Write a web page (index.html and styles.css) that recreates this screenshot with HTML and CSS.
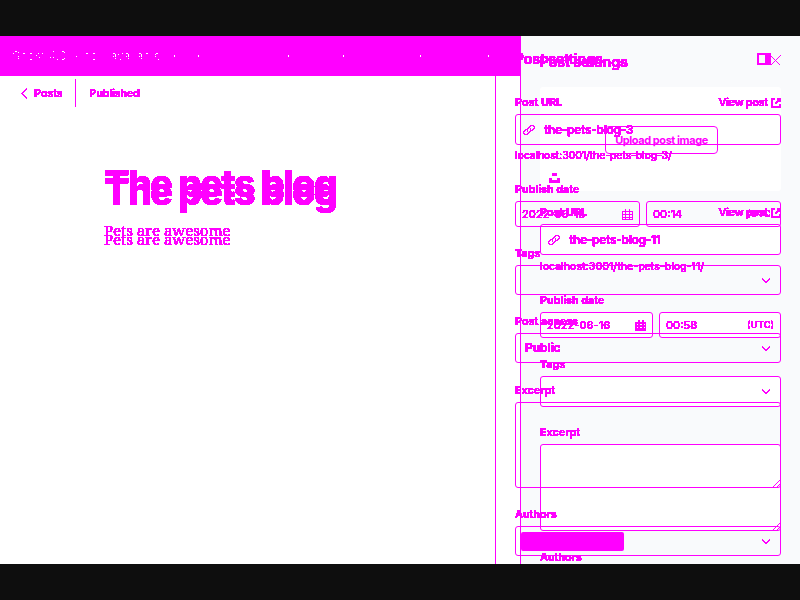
FILE: index.html
```html
<!DOCTYPE html>
<html lang="en">
<head>
<meta charset="utf-8">
<title>Post settings</title>
<link rel="stylesheet" href="styles.css">
</head>
<body>
<svg class="defs" width="0" height="0">
  <filter id="hard" x="-5%" y="-20%" width="110%" height="140%" color-interpolation-filters="sRGB"><feComponentTransfer><feFuncA type="discrete" tableValues="0 1 1 1 1 1 1 1 1 1 1 1 1 1 1 1"/></feComponentTransfer></filter>
  <filter id="mid" x="-5%" y="-20%" width="110%" height="140%" color-interpolation-filters="sRGB"><feComponentTransfer><feFuncA type="discrete" tableValues="0 0 0 1 1 1 1 1 1 1"/></feComponentTransfer></filter>
  <filter id="sparse" color-interpolation-filters="sRGB"><feComponentTransfer><feFuncA type="discrete" tableValues="0 0 0 0 0 0 0 0 1 1"/></feComponentTransfer></filter>
  <symbol id="chev" viewBox="0 0 10 7"><path d="M1 1.500l4 4 4-4"/></symbol>
  <symbol id="link" viewBox="0 0 12 12"><path d="M5 7.5a2 2 0 0 1 0-3l2.500-2.500a2 2 0 0 1 3 3L8.500 7M7 4.500a2 2 0 0 1 0 3L4.500 10a2 2 0 0 1-3-3L3.500 5"/></symbol>
  <symbol id="ext" viewBox="0 0 10 10"><path d="M4 1H1v8h8V6M6 1h3v3M4 6l5-5"/></symbol>
  <symbol id="cal" viewBox="0 0 11 11"><path d="M.5 2.500h10v8h-10zM.5 5.500h10M3.500 0v10M7.500 0v10M1 8.500h9"/></symbol>
</svg>
<main class="stage">
  <section class="layer">
    <div class="editor">
      <div class="banner"><span>Ghost 4.0 is now available</span><i></i><i></i><i></i><i></i><i></i><i></i></div>
      <nav class="bar"><svg class="back" viewBox="0 0 7 11"><path d="M6 .5L1 5.500l5 5"/></svg><span>Posts</span><b></b><span>Published</span></nav>
      <h1>The pets blog</h1>
      <p>Pets are awesome</p>
    </div>
    <div class="fill"></div>
  </section>
  <section class="layer second">
    <div class="editor">
      <h1>The pets blog</h1>
      <p>Pets are awesome</p>
    </div>
    <aside class="panel narrow">
      <header><h2>Post settings</h2><svg class="close" viewBox="0 0 11 11"><path d="M.5 .5l10 10M10.500 .5l-10 10"/></svg></header>
      <div class="upload"><button>Upload post image</button><svg class="unsplash" viewBox="0 0 11 10"><path d="M3 0h5v3H3zM0 5h3v2h5V5h3v5H0z"/></svg></div>
      <div class="label"><span>Post URL</span><span class="view">View post <svg viewBox="0 0 10 10"><use href="#ext"/></svg></span></div>
      <div class="box url"><svg viewBox="0 0 12 12"><use href="#link"/></svg><span>the-pets-blog-11</span></div>
      <div class="help">localhost:3001/the-pets-blog-11/</div>
      <div class="label date-label"><span>Publish date</span></div>
      <div class="dates"><div class="box"><span>2022-06-16</span><svg class="solid" viewBox="0 0 11 11"><use href="#cal"/></svg></div><div class="box"><span>00:58</span><small>(UTC)</small></div></div>
      <div class="label tag-label"><span>Tags</span></div>
      <div class="box select tags"><svg viewBox="0 0 10 7"><use href="#chev"/></svg></div>
      <div class="label"><span>Excerpt</span></div>
      <div class="box area"><svg viewBox="0 0 7 7"><path d="M0 7l7-7M4 7l3-3"/></svg></div>
      <div class="label"><span>Authors</span></div>
    </aside>
  </section>
  <section class="layer top">
    <aside class="panel wide">
      <header><h2>Post settings</h2><svg class="toggle" viewBox="0 0 14 12"><path d="M1 1h12v10H1z"/><path class="ink" d="M8 0h6v12H8z"/></svg></header>
      <div class="label"><span>Post URL</span><span class="view">View post <svg viewBox="0 0 10 10"><use href="#ext"/></svg></span></div>
      <div class="box url"><svg viewBox="0 0 12 12"><use href="#link"/></svg><span>the-pets-blog-3</span></div>
      <div class="help">localhost:3001/the-pets-blog-3/</div>
      <div class="label date-label"><span>Publish date</span></div>
      <div class="dates"><div class="box"><span>2022-06-15</span><svg viewBox="0 0 11 11"><use href="#cal"/></svg></div><div class="box"><span>00:14</span><small>(UTC)</small></div></div>
      <div class="label tag-label"><span>Tags</span></div>
      <div class="box select tags"><svg viewBox="0 0 10 7"><use href="#chev"/></svg></div>
      <div class="label"><span>Post access</span></div>
      <div class="box select"><span>Public</span><svg viewBox="0 0 10 7"><use href="#chev"/></svg></div>
      <div class="label"><span>Excerpt</span></div>
      <div class="box area"><svg viewBox="0 0 7 7"><path d="M0 7l7-7M4 7l3-3"/></svg></div>
      <div class="label"><span>Authors</span></div>
      <div class="box select"><div class="chip"></div><svg viewBox="0 0 10 7"><use href="#chev"/></svg></div>
    </aside>
  </section>
</main>
</body>
</html>
```
FILE: styles.css
```css
* { box-sizing: border-box; }
body { margin: 0; background: #0e0e0e; font: 500 11px/14px Inter, sans-serif; color: #f0f; }
.defs { position: absolute; }
.stage { height: 528px; margin: 36px 0; display: grid; overflow: hidden; background: #fff; }
.layer { grid-area: 1 / 1; height: 528px; display: flex; justify-content: space-between; overflow: hidden; }
.top { z-index: 1; }
svg { fill: none; stroke: #f0f; stroke-width: 1.2; flex: none; shape-rendering: crispEdges; }
.editor { width: 520px; flex: none; }
.fill { width: 280px; background: #f9fafc; }
.banner { height: 40px; background: #f0f; color: #fff; display: grid; grid-template-columns: 162px 24px 90px 55px 77px 68px 1fr; align-items: center; padding-left: 12px; }
.banner span { filter: url(#sparse); font-size: 11px; font-weight: 300; letter-spacing: .6px; white-space: nowrap; }
.banner i { width: 1px; height: 2px; background: #fff; }
.bar { height: 34px; display: flex; align-items: center; padding-left: 21px; font-weight: 600; font-size: 11px; letter-spacing: -.25px; }
.bar svg { width: 7px; height: 11px; margin-right: 6px; }
.bar b { width: 1px; height: 28px; background: #f0f; margin: 0 13px; }
.bar span, h1, h2, .editor p, .label span, .help, .box > span, small { filter: url(#hard); }
h1 { margin: 51px 0 0 104px; font: 800 37.500px/46px Inter, sans-serif; letter-spacing: -1.5px; width: 260px; white-space: nowrap; }
.editor p { margin: 14px 0 0 104px; width: 150px; font: 15px/18px "Noto Serif", "Liberation Serif", serif; letter-spacing: -.06px; }
.second h1 { margin-top: 133px; }
.second .editor p { margin-top: 15px; }
.panel { height: 528px; flex: none; padding-right: 19px; border-left: 1px solid #f0f; overflow: hidden; }
.wide { width: 305px; padding-left: 19px; margin-left: auto; }
.narrow { width: 280px; padding-left: 19px; }
header { display: flex; justify-content: space-between; padding-top: 13px; height: 57px; }
h2 { margin: 0; font: 700 14px/20px Inter, sans-serif; letter-spacing: -.1px; }
.narrow header { padding-top: 16px; height: 51px; }
.close { width: 11px; height: 11px; margin-top: 3px; }
.toggle { width: 14px; height: 12px; margin: 4px 10px 0 0; stroke-width: 2; }
.ink { fill: #f0f; stroke: none; }
.label { height: 21px; padding-top: 2px; display: flex; justify-content: space-between; font-weight: 600; font-size: 11px; letter-spacing: -.1px; }
.view { letter-spacing: -.4px; }
.view svg { width: 10px; height: 10px; margin-left: 1px; vertical-align: -2px; stroke-width: 1.6; }
.box { border: 1px solid #f0f; border-radius: 3px; height: 31px; display: flex; align-items: center; }
.narrow .box { background: #fff; }
.url svg { width: 12px; height: 12px; margin: 0 9px 0 7px; }
.url { font-size: 12px; font-weight: 600; letter-spacing: -.3px; }
.help { height: 23px; padding-top: 4px; font-size: 10.500px; letter-spacing: -.17px; white-space: nowrap; }
.narrow .help { height: 24px; padding-top: 5px; letter-spacing: 0; }
.date-label { margin-top: 12px; }
.dates { display: flex; gap: 6px; }
.dates .box { height: 26px; flex: 1; padding: 0 6px; justify-content: space-between; }
.dates .box svg { width: 11px; height: 11px; }
.dates .box:first-child { flex: none; width: 125px; }
.narrow .dates .box:first-child { width: 113px; }
.dates .box .solid { stroke-width: 2; }
small { font-size: 9.500px; }
.tag-label { margin-top: 17px; }
.select { padding: 0 9px; font-size: 12px; font-weight: 600; margin-bottom: 17px; }
.tags { margin-bottom: 16px; }
.wide .select { height: 30px; }
.wide .tags { margin-bottom: 17px; }
.wide .tags + .label + .select { margin-bottom: 18px; }
.select svg { width: 10px; height: 7px; margin-left: auto; }
.area { height: 86px; align-items: flex-end; justify-content: flex-end; margin-bottom: 17px; }
.narrow .area { height: 87px; }
.area svg { width: 7px; height: 7px; }
.chip { width: 103px; height: 19px; margin-left: -4px; border-radius: 2px; background: #f0f; }
.upload { height: 104px; margin-bottom: 12px; padding-top: 39px; background: #fff; border-radius: 3px; }
.upload button { display: block; height: 28px; width: 113px; margin-left: 65px; padding: 0; border: 1px solid #f0f; border-radius: 4px; background: #fff; color: #f0f; font: 700 11px Inter, sans-serif; letter-spacing: -.45px; }
.unsplash { display: block; width: 11px; height: 10px; margin: 19px 0 0 9px; fill: #f0f; stroke: none; }
```
